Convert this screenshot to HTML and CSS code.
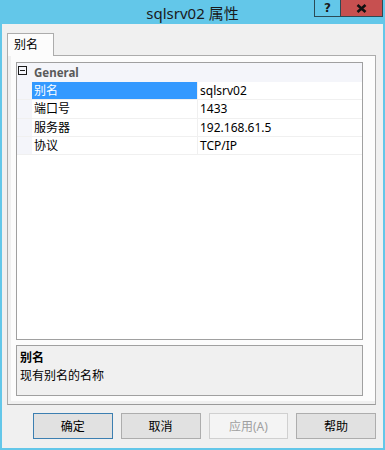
FILE: index.html
```html
<!DOCTYPE html>
<html lang="zh-CN">
<head>
    <meta charset="UTF-8">
    <title>sqlsrv02 属性</title>
    <link rel="stylesheet" href="styles.css">
</head>
<body>

<div class="window">
    <!-- Title bar -->
    <div class="titlebar">
        <span></span>
        <span class="title">sqlsrv02 属性</span>
        <div class="caption-buttons">
            <div class="cap-btn help">?</div>
            <div class="cap-btn close">
                <svg width="11" height="9" viewBox="0 0 11 9">
                    <path d="M1.5 1 L9.5 8 M9.5 1 L1.5 8" stroke="#111" stroke-width="2.6" fill="none"/>
                </svg>
            </div>
        </div>
    </div>

    <div class="body">
        <div class="tab-strip">
            <div class="tab active">别名</div>
        </div>

        <div class="tab-page">
            <div class="prop-grid">
                <div class="category">
                    <span class="expander"></span>
                    <span class="cat-name">General</span>
                </div>
                <div class="row selected">
                    <span class="margin"></span>
                    <span class="label">别名</span>
                    <span class="value">sqlsrv02</span>
                </div>
                <div class="row">
                    <span class="margin"></span>
                    <span class="label">端口号</span>
                    <span class="value">1433</span>
                </div>
                <div class="row">
                    <span class="margin"></span>
                    <span class="label">服务器</span>
                    <span class="value">192.168.61.5</span>
                </div>
                <div class="row">
                    <span class="margin"></span>
                    <span class="label">协议</span>
                    <span class="value">TCP/IP</span>
                </div>
            </div>

            <div class="description">
                <div class="desc-title">别名</div>
                <div class="desc-text">现有别名的名称</div>
            </div>
        </div>

        <div class="buttons">
            <button class="btn default">确定</button>
            <button class="btn">取消</button>
            <button class="btn" disabled>应用(A)</button>
            <button class="btn">帮助</button>
        </div>
    </div>
</div>

</body>
</html>
```

FILE: styles.css
```css
body {
    margin: 0;
    padding: 0;
    font-family: "Noto Sans", "Noto Sans CJK SC", sans-serif;
    font-size: 12px;
    color: #000;
    background: #fff;
}

.window {
    width: 385px;
    height: 450px;
    box-sizing: border-box;
    background-color: #f0f0f0;
    border: 2px solid #63c7e9;
    border-top: none;
    display: flex;
    flex-direction: column;
}

/* title bar */
.titlebar {
    height: 24px;
    background-color: #63c7e9;
    display: grid;
    grid-template-columns: 1fr auto 1fr;
    margin: 0 -2px;
}

.title {
    font-size: 15px;
    line-height: 24px;
    color: #1a1a1a;
    padding-top: 1px;
}

.caption-buttons {
    justify-self: end;
    display: flex;
    margin-right: 2px;
    height: 17px;
}

.cap-btn {
    height: 16px;
    display: flex;
    align-items: center;
    justify-content: center;
    border: 1px solid #2b4a55;
    border-top: none;
}

.cap-btn.help {
    width: 25px;
    font-family: "DejaVu Sans", sans-serif;
    font-weight: bold;
    font-size: 12px;
    color: #1a1a1a;
    border-right: none;
}

.cap-btn.close {
    width: 41px;
    background-color: #c75050;
}

/* tabs */
.body {
    flex: 1;
    display: flex;
    flex-direction: column;
    padding: 9px 7px 0 5px;
}

.tab-strip {
    display: flex;
    height: 23px;
}

.tab {
    width: 47px;
    height: 23px;
    box-sizing: border-box;
    padding-left: 6px;
    line-height: 21px;
    border: 1px solid #acacac;
    border-bottom: none;
    background-color: #fcfcfc;
    position: relative;
    z-index: 1;
}

.tab-page {
    height: 350px;
    box-sizing: border-box;
    border: 1px solid #acacac;
    border-bottom-color: #9a9a9a;
    background-color: #fcfcfc;
    margin-top: -1px;
    padding: 6px 12px 8px 8px;
    display: flex;
    flex-direction: column;
    box-shadow: inset 3px 0 0 #f0f0f0, inset 0 -3px 0 #f0f0f0;
}

/* property grid */
.prop-grid {
    height: 279px;
    box-sizing: border-box;
    border: 1px solid #a0a0a0;
    background-color: #fff;
}

.category {
    height: 19px;
    display: flex;
    align-items: center;
    background-color: #f4f5fa;
}

.expander {
    width: 7px;
    height: 7px;
    border: 1px solid #1a1a1a;
    margin: 0 7px 0 1px;
    position: relative;
    top: -2px;
    background: linear-gradient(#1a1a1a, #1a1a1a) no-repeat center / 5px 1px;
}

.cat-name {
    font-weight: bold;
    color: #5a5a5a;
    font-size: 11.5px;
}

.row {
    height: 18.33px;
    display: flex;
    border-bottom: 1px solid #f0f0f0;
    box-sizing: border-box;
}

.row .margin {
    width: 15px;
    background-color: #f4f5fa;
}

.row .label {
    width: 163px;
    padding-left: 2px;
    line-height: 18px;
    border-right: 1px solid #f0f0f0;
}

.row .value {
    flex: 1;
    padding-left: 2px;
    line-height: 18px;
}

.row.selected .label {
    background-color: #3399ff;
    color: #fff;
}

/* description */
.description {
    margin-top: 5px;
    height: 51px;
    box-sizing: border-box;
    border: 1px solid #a0a0a0;
    background-color: #f0f0f0;
    padding: 4px 3px 2px;
}

.desc-title {
    font-weight: bold;
    line-height: 16px;
}

.desc-text {
    line-height: 20px;
}

/* dialog buttons */
.buttons {
    display: flex;
    gap: 8px;
    padding: 8px 0 0 26px;
}

.btn {
    width: 80px;
    height: 26px;
    font-family: "Noto Sans", "Noto Sans CJK SC", sans-serif;
    font-size: 12px;
    color: #000;
    background-color: #e1e1e1;
    border: 1px solid #adadad;
    padding: 0;
}

.btn.default {
    border: 1px solid #3c7fb1;
    box-shadow: inset 0 0 0 1px #e1e1e1;
}

.btn:disabled {
    background-color: #f4f4f4;
    border-color: #d0d0d0;
    color: #a0a0a0;
}
```
